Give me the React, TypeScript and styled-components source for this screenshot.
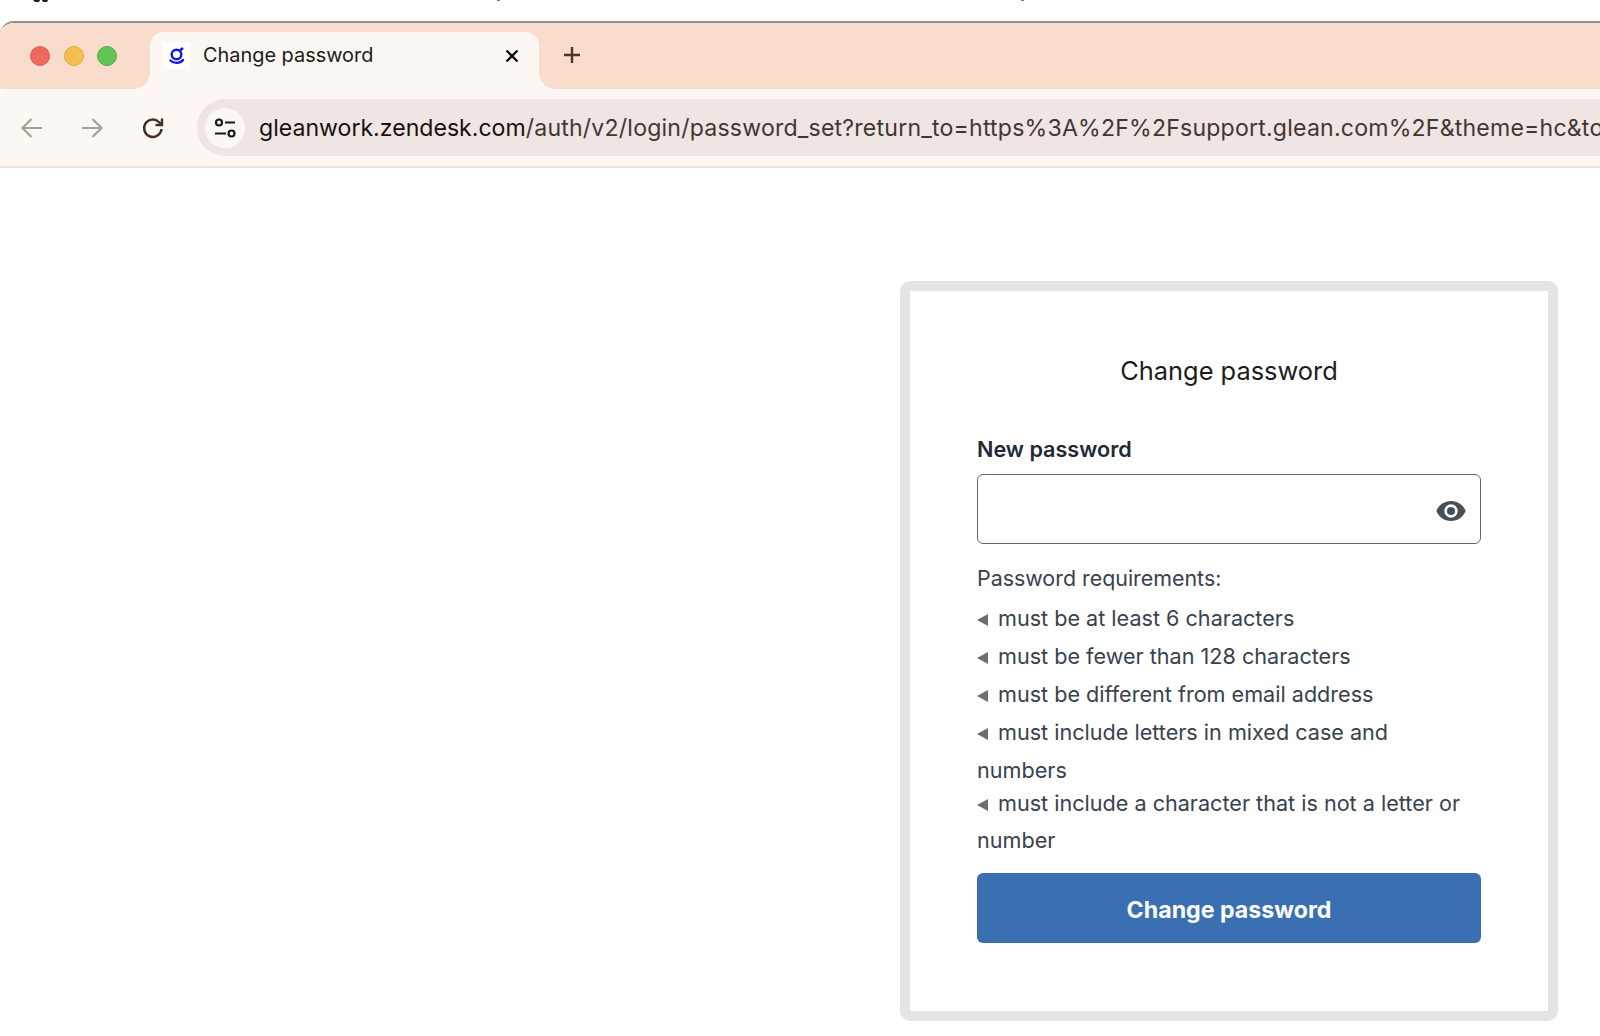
import React from 'react'
import styled, { createGlobalStyle } from 'styled-components'

const GlobalStyle = createGlobalStyle`
    html, body {
        margin: 0;
        padding: 0;
        background: #ffffff;
    }
    body {
        font-family: Inter, "Liberation Sans", sans-serif;
        overflow: hidden;
    }
`

const Page = styled.div`
    width: 1600px;
    height: 1036px;
    overflow: hidden;
    padding-top: 21px;
    box-sizing: border-box;
`

// bottoms of the cropped menu bar glyphs above the window
const CroppedMarks = styled.svg`
    position: absolute;
    left: 0;
    top: 0;
`

const BrowserFrame = styled.div`
    border-top: 2px solid #8d8d8b;
    border-top-left-radius: 14px;
    overflow: hidden;
`

const TabStrip = styled.div`
    height: 66px;
    background: #f9dccc;
    display: flex;
    align-items: flex-end;
    padding-left: 150px;
`

const Lights = styled.div`
    position: absolute;
    left: 30px;
    top: 46px;
    display: flex;
    gap: 13.5px;
`

const Light = styled.span<{ $color: string; $edge: string }>`
    width: 20px;
    height: 20px;
    border-radius: 50%;
    box-sizing: border-box;
    background: ${p => p.$color};
    border: 1px solid ${p => p.$edge};
`

const Tab = styled.div`
    position: relative;
    width: 389px;
    height: 57px;
    box-sizing: border-box;
    padding: 0 19px 10px 13px;
    background: #fdf7f3;
    border-radius: 14px 14px 0 0;
    display: flex;
    align-items: center;
    &::before, &::after {
        content: '';
        position: absolute;
        bottom: 0;
        width: 16px;
        height: 16px;
    }
    &::before {
        left: -16px;
        background: radial-gradient(circle at 0 0, #f9dccc 15.5px, #fdf7f3 16px);
    }
    &::after {
        right: -16px;
        background: radial-gradient(circle at 100% 0, #f9dccc 15.5px, #fdf7f3 16px);
    }
`

const Favicon = styled.span`
    width: 27px;
    height: 27px;
    background: #ffffff;
    display: flex;
    flex-shrink: 0;
`

const TabTitle = styled.span`
    flex: 1;
    margin: 0 0 2px 13px;
    font-size: 19.9px;
    color: #1f1b18;
`

const NewTab = styled.span`
    display: flex;
    margin: 0 0 24px 23px;
`

const Toolbar = styled.div`
    position: relative;
    height: 77px;
    background: #fdf7f3;
    border-bottom: 2px solid #f3e3da;
    border-top-left-radius: 8px;
    display: flex;
    align-items: center;
    padding: 0 0 0 20px;
    margin-top: 0;
`

const NavIcon = styled.span<{ $gap: number }>`
    display: flex;
    margin-right: ${p => p.$gap}px;
`

const UrlPill = styled.div`
    flex: 1;
    height: 57px;
    min-width: 0;
    margin-left: 12px;
    background: #efe5e2;
    border-radius: 28px 0 0 28px;
    display: flex;
    align-items: center;
    padding-left: 8px;
    overflow: hidden;
`

const SiteBadge = styled.span`
    width: 40px;
    height: 40px;
    border-radius: 50%;
    background: #fdf7f3;
    display: flex;
    align-items: center;
    justify-content: center;
    flex-shrink: 0;
`

const UrlText = styled.div`
    margin-left: 14px;
    font-size: 23.1px;
    letter-spacing: 0.2px;
    white-space: nowrap;
    color: #3f3734;
    b {
        font-weight: 400;
        letter-spacing: 0;
        color: #14110f;
    }
`

const Content = styled.main`
    display: flex;
    justify-content: flex-end;
    padding: 113px 42px 0 0;
`

const Card = styled.section`
    width: 658px;
    height: 740px;
    box-sizing: border-box;
    border: 10px solid #e4e4e4;
    border-radius: 10px;
    padding: 62px 67px 0;
    background: #ffffff;
`

const Title = styled.h1`
    margin: 0;
    font-size: 25.4px;
    line-height: 36px;
    font-weight: 400;
    text-align: center;
    color: #1c1c1c;
`

const Label = styled.label`
    display: block;
    margin-top: 45px;
    font-size: 21.6px;
    line-height: 30px;
    font-weight: 600;
    color: #1f2a37;
`

const InputBox = styled.div`
    margin-top: 10px;
    height: 70px;
    box-sizing: border-box;
    border: 1.5px solid #5c6772;
    border-radius: 6px;
    display: flex;
    align-items: center;
    justify-content: flex-end;
    padding: 3px 13px 0 0;
`

const Requirements = styled.div`
    margin-top: 18.5px;
    font-size: 21.6px;
    color: #37424e;
`

const ReqHeading = styled.div`
    font-size: 21.4px;
    line-height: 30px;
    margin-bottom: 7.5px;
`

const ReqList = styled.ul`
    margin: 0;
    padding: 0;
    list-style: none;
`

const ReqItem = styled.li`
    line-height: 37.9px;
    &:nth-child(5) {
        margin-top: -5px;
    }
`

const Arrow = styled.span`
    display: inline-block;
    width: 0;
    height: 0;
    margin-right: 10px;
    border-style: solid;
    border-width: 6px 11px 6px 0;
    border-color: transparent #6e6e6e transparent transparent;
`

const SubmitButton = styled.button`
    display: block;
    width: 100%;
    height: 70px;
    margin-top: 13px;
    padding: 3px 0 0;
    border: 0;
    border-radius: 6px;
    background: #3a70b2;
    color: #ffffff;
    font-family: inherit;
    font-size: 23.2px;
    font-weight: 700;
`

const requirements = [
    'must be at least 6 characters',
    'must be fewer than 128 characters',
    'must be different from email address',
    'must include letters in mixed case and numbers',
    'must include a character that is not a letter or number',
]

function App() {
    return (
        <Page>
            <GlobalStyle />
            <CroppedMarks width="1100" height="3" viewBox="0 0 1100 3">
                <path d="M33 0h7l-1 2h-4zM42 0h6l-1 2h-4z" fill="#1d1d1d" />
                <path d="M497 0h3v1h-3zM1021 0h3v1h-3z" fill="#777777" />
            </CroppedMarks>
            <BrowserFrame>
                <Lights>
                    <Light $color="#ee6a5f" $edge="#de5d52" />
                    <Light $color="#f5bf4f" $edge="#e0a93f" />
                    <Light $color="#61c454" $edge="#54ad48" />
                </Lights>
                <TabStrip>
                    <Tab>
                        <Favicon>
                            <svg width="27" height="27" viewBox="0 0 27 27" fill="none" stroke="#1414e6" strokeWidth="2.4">
                                <circle cx="13.500" cy="12.500" r="4.800" />
                                <path d="M17 8.500l3-2.500" />
                                <path d="M7.500 18.500c3 3.200 9.500 3.200 12.500-.5" strokeLinecap="round" />
                            </svg>
                        </Favicon>
                        <TabTitle>Change password</TabTitle>
                        <svg width="16" height="16" viewBox="0 0 16 16" stroke="#16110e" strokeWidth="2.4">
                            <path d="M2.500 2.500l11 11M13.500 2.500l-11 11" />
                        </svg>
                    </Tab>
                    <NewTab>
                        <svg width="20" height="20" viewBox="0 0 20 20" stroke="#4a372c" strokeWidth="2.400">
                            <path d="M10 2v16M2 10h16" />
                        </svg>
                    </NewTab>
                </TabStrip>
                <Toolbar>
                    <NavIcon $gap={36}>
                        <svg width="24" height="24" viewBox="0 0 24 24" fill="none" stroke="#a89f99" strokeWidth="2.200">
                            <path d="M22 12H3M11.500 3l-9 9 9 9" />
                        </svg>
                    </NavIcon>
                    <NavIcon $gap={37}>
                        <svg width="24" height="24" viewBox="0 0 24 24" fill="none" stroke="#a89f99" strokeWidth="2.200">
                            <path d="M2 12h19M12.500 3l9 9-9 9" />
                        </svg>
                    </NavIcon>
                    <NavIcon $gap={20}>
                        <svg width="24" height="24" viewBox="0 0 24 24" fill="none" stroke="#43301f" strokeWidth="2.400">
                            <path d="M20.500 13a8.700 8.700 0 1 1-2.600-7L21 9" />
                            <path d="M21 2.500V9h-6.500" />
                        </svg>
                    </NavIcon>
                    <UrlPill>
                        <SiteBadge>
                            <svg width="24" height="24" viewBox="0 0 24 24" fill="none" stroke="#1b1715" strokeWidth="2.200">
                                <circle cx="6" cy="6.500" r="3" />
                                <path d="M12 6.500h10M2 17.500h11" />
                                <circle cx="18.500" cy="17.500" r="3" />
                            </svg>
                        </SiteBadge>
                        <UrlText><b>gleanwork.zendesk.com</b>/auth/v2/login/password_set?return_to=https%3A%2F%2Fsupport.glean.com%2F&amp;theme=hc&amp;to</UrlText>
                    </UrlPill>
                </Toolbar>
            </BrowserFrame>
            <Content>
                <Card>
                    <Title>Change password</Title>
                    <Label>New password</Label>
                    <InputBox>
                        <svg width="32" height="32" viewBox="0 0 24 24" fill="#454f57">
                            <path d="M12 4.500C7 4.500 2.730 7.610 1 12c1.730 4.390 6 7.500 11 7.500s9.270-3.110 11-7.500c-1.730-4.390-6-7.500-11-7.500zM12 17a5 5 0 1 1 0-10 5 5 0 0 1 0 10zm0-8a3 3 0 1 0 0 6 3 3 0 0 0 0-6z" />
                        </svg>
                    </InputBox>
                    <Requirements>
                        <ReqHeading>Password requirements:</ReqHeading>
                        <ReqList>
                            {requirements.map(text => (
                                <ReqItem key={text}>
                                    <Arrow />
                                    {text}
                                </ReqItem>
                            ))}
                        </ReqList>
                    </Requirements>
                    <SubmitButton>Change password</SubmitButton>
                </Card>
            </Content>
        </Page>
    )
}

export default App
